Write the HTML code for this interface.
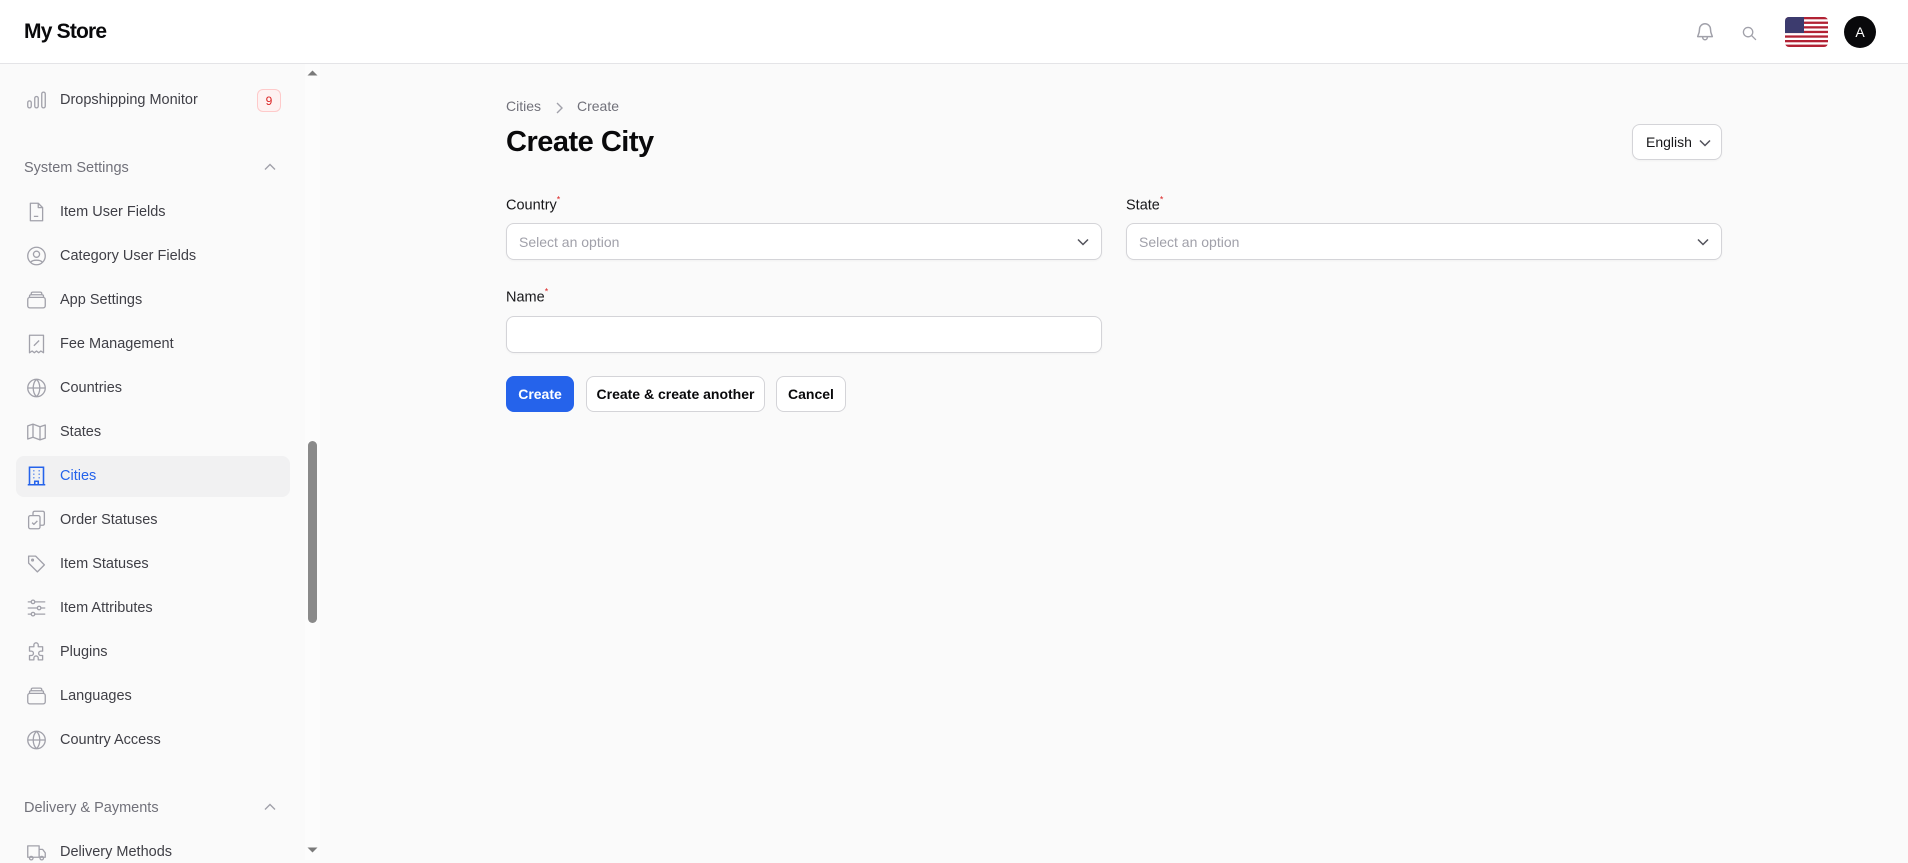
<!DOCTYPE html>
<html><head><meta charset="utf-8"><style>
*{box-sizing:border-box;margin:0;padding:0}
body{width:1908px;height:860px;overflow:hidden;background:#fafafa;font-family:"Liberation Sans",sans-serif;color:#18181b;position:relative}
.hdr{position:absolute;left:0;top:0;width:1908px;height:64px;background:#fff;border-bottom:1px solid #e4e4e7}
.logo{position:absolute;left:24px;top:20px;font-size:21px;font-weight:bold;letter-spacing:-0.8px;color:#09090b}
.sb{position:absolute;left:0;top:64px;width:305px;height:796px;background:#fafafa}
.track{position:absolute;left:305px;top:64px;width:15px;height:796px;background:#fcfcfc}
.thumb{position:absolute;left:308px;top:441px;width:9px;height:182px;border-radius:5px;background:#8a8a8a}
.it{position:absolute;left:60px;font-size:14.5px;color:#3f3f46;transform:translateY(-50%)}
.ic{position:absolute;left:26px;width:21px;height:21px;transform:translateY(-50%)}
.grp{position:absolute;left:24px;font-size:14.5px;color:#71717a;transform:translateY(-50%)}
.chev{position:absolute;left:264px;transform:translateY(-50%)}
.lbl{position:absolute;font-size:14.5px;color:#18181b;transform:translateY(-50%)}
.lbl sup{color:#dc2626;font-size:9px;vertical-align:7px}
.box{position:absolute;background:#fff;border:1px solid #d4d4d8;border-radius:8px;box-shadow:0 1px 2px rgba(0,0,0,.04)}
.ph{position:absolute;left:12px;top:50%;transform:translateY(-50%);font-size:14px;color:#a1a1aa}
.btn{position:absolute;top:376px;height:36px;border-radius:8px;font-size:14px;font-weight:bold;display:flex;align-items:center;justify-content:center;background:#fff;border:1px solid #d4d4d8;color:#09090b}
</style></head><body>
<div class="hdr"><div class="logo">My Store</div>
<svg style="position:absolute;left:1694px;top:21px" width="22" height="22" viewBox="0 0 24 24" fill="none" stroke="#a1a1aa" stroke-width="1.6" stroke-linecap="round" stroke-linejoin="round"><path d="M6 9a6 6 0 0 1 12 0c0 5 2 7 2 8H4c0-1 2-3 2-8z"/><path d="M9.5 18a2.5 2.5 0 0 0 5 0"/></svg>
<svg style="position:absolute;left:1742px;top:26px" width="15" height="15" viewBox="0 0 16 16" fill="none" stroke="#a1a1aa" stroke-width="1.4" stroke-linecap="round"><circle cx="6.5" cy="6.5" r="5"/><path d="M10.5 10.5l4 4"/></svg>
<svg style="position:absolute;left:1785px;top:17px" width="43" height="30" viewBox="0 0 43 30"><defs><clipPath id="fc"><rect width="43" height="30" rx="4"/></clipPath></defs><g clip-path="url(#fc)"><rect width="43" height="30" fill="#fff"/><g fill="#b22234"><rect y="0" width="43" height="2.3"/><rect y="4.6" width="43" height="2.3"/><rect y="9.2" width="43" height="2.3"/><rect y="13.8" width="43" height="2.3"/><rect y="18.4" width="43" height="2.3"/><rect y="23" width="43" height="2.3"/><rect y="27.6" width="43" height="2.4"/></g><rect width="19" height="16" fill="#3c3b6e"/></g></svg>
<div style="position:absolute;left:1844px;top:16px;width:32px;height:32px;border-radius:50%;background:#09090b;color:#fff;font-size:14px;display:flex;align-items:center;justify-content:center">A</div>
</div>
<div class="sb">
<div style="position:absolute;left:16px;top:392px;width:274px;height:41px;border-radius:8px;background:#f1f1f2"></div>
</div>
<div class="track"></div><div class="thumb"></div>
<svg style="position:absolute;left:307px;top:69px" width="11" height="7"><path d="M0.5 6.5L5.5 1.5L10.5 6.5z" fill="#7a7a7a"/></svg>
<svg style="position:absolute;left:307px;top:847px" width="11" height="7"><path d="M0.5 0.5L5.5 5.5L10.5 0.5z" fill="#7a7a7a"/></svg>

<svg class="ic" style="top:100px" viewBox="0 0 24 24" fill="none" stroke="#a1a1aa" stroke-width="1.5"><rect x="2" y="13" width="4" height="8" rx="2"/><rect x="10" y="8" width="4" height="13" rx="2"/><rect x="18" y="3" width="4" height="18" rx="2"/></svg>
<div class="it" style="top:100px">Dropshipping Monitor</div>
<div style="position:absolute;left:257px;top:89px;width:24px;height:23px;border:1px solid #fecaca;background:#fef2f2;border-radius:6px;color:#dc2626;font-size:12px;display:flex;align-items:center;justify-content:center">9</div>

<div class="grp" style="top:168px">System Settings</div>
<svg class="chev" style="top:167px" width="12" height="8" viewBox="0 0 12 8" fill="none" stroke="#a1a1aa" stroke-width="1.4"><path d="M1 6.5l5-5 5 5"/></svg>

<svg class="ic" style="top:212px" viewBox="0 0 24 24" fill="none" stroke="#a1a1aa" stroke-width="1.5" stroke-linejoin="round"><path d="M5 2h9l5 5v15H5z"/><path d="M14 2v5h5M9 17h5"/></svg>
<div class="it" style="top:212px">Item User Fields</div>
<svg class="ic" style="top:256px" viewBox="0 0 24 24" fill="none" stroke="#a1a1aa" stroke-width="1.5"><circle cx="12" cy="12" r="10"/><circle cx="12" cy="10" r="3.5"/><path d="M5.5 19c2-3 11-3 13 0"/></svg>
<div class="it" style="top:256px">Category User Fields</div>
<svg class="ic" style="top:300px" viewBox="0 0 24 24" fill="none" stroke="#a1a1aa" stroke-width="1.5"><rect x="2" y="9" width="20" height="12" rx="2.5"/><path d="M4 9V7.5Q4 6 6 6h12q2 0 2 1.5V9M6 6V4.5Q6 3 8 3h8q2 0 2 1.5V6"/></svg>
<div class="it" style="top:300px">App Settings</div>
<svg class="ic" style="top:344px" viewBox="0 0 24 24" fill="none" stroke="#a1a1aa" stroke-width="1.5" stroke-linejoin="round"><path d="M4 2h16v20l-3-2-2.5 2-2.5-2-2.5 2L7 20l-3 2z"/><path d="M9 14l6-6M9.5 9h.1M14.5 13h.1"/></svg>
<div class="it" style="top:344px">Fee Management</div>
<svg class="ic" style="top:388px" viewBox="0 0 24 24" fill="none" stroke="#a1a1aa" stroke-width="1.5"><circle cx="12" cy="12" r="10"/><path d="M2 12h20M12 2c-5 5-5 15 0 20M12 2c5 5 5 15 0 20"/></svg>
<div class="it" style="top:388px">Countries</div>
<svg class="ic" style="top:432px" viewBox="0 0 24 24" fill="none" stroke="#a1a1aa" stroke-width="1.5" stroke-linejoin="round"><path d="M2 5l6-2 8 3 6-2v15l-6 2-8-3-6 2z"/><path d="M8 3v15M16 6v15"/></svg>
<div class="it" style="top:432px">States</div>
<svg class="ic" style="top:476px" viewBox="0 0 24 24" fill="none" stroke="#2563eb" stroke-width="1.8"><path d="M4 2h16v20H4zM2 22h20"/><path d="M8.5 6h1M14.5 6h1M8.5 10h1M14.5 10h1M8.5 14h1M14.5 14h1M10 22v-4h4v4"/></svg>
<div class="it" style="top:476px;color:#2563eb">Cities</div>
<svg class="ic" style="top:520px" viewBox="0 0 24 24" fill="none" stroke="#a1a1aa" stroke-width="1.5" stroke-linejoin="round"><rect x="3" y="7" width="13" height="15" rx="2"/><path d="M8 7V4q0-2 2-2h9q2 0 2 2v12q0 2-2 2h-3"/><path d="M7 15l2 2 4-4"/></svg>
<div class="it" style="top:520px">Order Statuses</div>
<svg class="ic" style="top:564px" viewBox="0 0 24 24" fill="none" stroke="#a1a1aa" stroke-width="1.5" stroke-linejoin="round"><path d="M3 3h8l10 10-8 8L3 11z"/><circle cx="7.5" cy="7.5" r="1"/></svg>
<div class="it" style="top:564px">Item Statuses</div>
<svg class="ic" style="top:608px" viewBox="0 0 24 24" fill="none" stroke="#a1a1aa" stroke-width="1.5"><path d="M2 5h20M2 12h20M2 19h20"/><circle cx="8" cy="5" r="2" fill="#fafafa"/><circle cx="15" cy="12" r="2" fill="#fafafa"/><circle cx="8" cy="19" r="2" fill="#fafafa"/></svg>
<div class="it" style="top:608px">Item Attributes</div>
<svg class="ic" style="top:652px" viewBox="0 0 24 24" fill="none" stroke="#a1a1aa" stroke-width="1.5" stroke-linejoin="round"><path d="M9 4a2.5 2.5 0 0 1 5 0v2h5v5h-2a2.5 2.5 0 0 0 0 5h2v5h-5v-2a2.5 2.5 0 0 0-5 0v2H4v-5h2a2.5 2.5 0 0 0 0-5H4V6h5z"/></svg>
<div class="it" style="top:652px">Plugins</div>
<svg class="ic" style="top:696px" viewBox="0 0 24 24" fill="none" stroke="#a1a1aa" stroke-width="1.5"><rect x="2" y="9" width="20" height="12" rx="2.5"/><path d="M4 9V7.5Q4 6 6 6h12q2 0 2 1.5V9M6 6V4.5Q6 3 8 3h8q2 0 2 1.5V6"/></svg>
<div class="it" style="top:696px">Languages</div>
<svg class="ic" style="top:740px" viewBox="0 0 24 24" fill="none" stroke="#a1a1aa" stroke-width="1.5"><circle cx="12" cy="12" r="10"/><path d="M2 12h20M12 2c-5 5-5 15 0 20M12 2c5 5 5 15 0 20"/></svg>
<div class="it" style="top:740px">Country Access</div>

<div class="grp" style="top:808px">Delivery &amp; Payments</div>
<svg class="chev" style="top:807px" width="12" height="8" viewBox="0 0 12 8" fill="none" stroke="#a1a1aa" stroke-width="1.4"><path d="M1 6.5l5-5 5 5"/></svg>
<svg class="ic" style="top:852px" viewBox="0 0 24 24" fill="none" stroke="#a1a1aa" stroke-width="1.5" stroke-linejoin="round"><path d="M2 5h13v13H2zM15 9h4l3 4v5h-7"/><circle cx="6" cy="19" r="2"/><circle cx="18" cy="19" r="2"/></svg>
<div class="it" style="top:852px">Delivery Methods</div>

<div style="position:absolute;left:506px;top:98px;font-size:14px;color:#71717a">Cities</div>
<svg style="position:absolute;left:555px;top:102px" width="8" height="12" viewBox="0 0 8 12" fill="none" stroke="#a1a1aa" stroke-width="1.4"><path d="M2 1l5 5-5 5"/></svg>
<div style="position:absolute;left:577px;top:98px;font-size:14px;color:#71717a">Create</div>
<div style="position:absolute;left:506px;top:126px;font-size:29px;font-weight:bold;letter-spacing:-0.5px;color:#09090b">Create City</div>

<div class="box" style="left:1632px;top:124px;width:90px;height:36px"><span style="position:absolute;left:13px;top:9px;font-size:14px;color:#18181b">English</span>
<svg style="position:absolute;left:66px;top:14px" width="12" height="8" viewBox="0 0 12 8" fill="none" stroke="#52525b" stroke-width="1.5"><path d="M1 1.5l5 5 5-5"/></svg></div>

<div class="lbl" style="left:506px;top:204px">Country<sup>*</sup></div>
<div class="box" style="left:506px;top:223px;width:596px;height:37px"><span class="ph">Select an option</span>
<svg style="position:absolute;right:12px;top:14px" width="12" height="8" viewBox="0 0 12 8" fill="none" stroke="#52525b" stroke-width="1.5"><path d="M1 1.5l5 5 5-5"/></svg></div>
<div class="lbl" style="left:1126px;top:204px">State<sup>*</sup></div>
<div class="box" style="left:1126px;top:223px;width:596px;height:37px"><span class="ph">Select an option</span>
<svg style="position:absolute;right:12px;top:14px" width="12" height="8" viewBox="0 0 12 8" fill="none" stroke="#52525b" stroke-width="1.5"><path d="M1 1.5l5 5 5-5"/></svg></div>

<div class="lbl" style="left:506px;top:296px">Name<sup>*</sup></div>
<div class="box" style="left:506px;top:316px;width:596px;height:37px"></div>

<div class="btn" style="left:506px;width:68px;background:#2563eb;border-color:#2563eb;color:#fff">Create</div>
<div class="btn" style="left:586px;width:179px">Create &amp; create another</div>
<div class="btn" style="left:776px;width:70px">Cancel</div>
</body></html>
